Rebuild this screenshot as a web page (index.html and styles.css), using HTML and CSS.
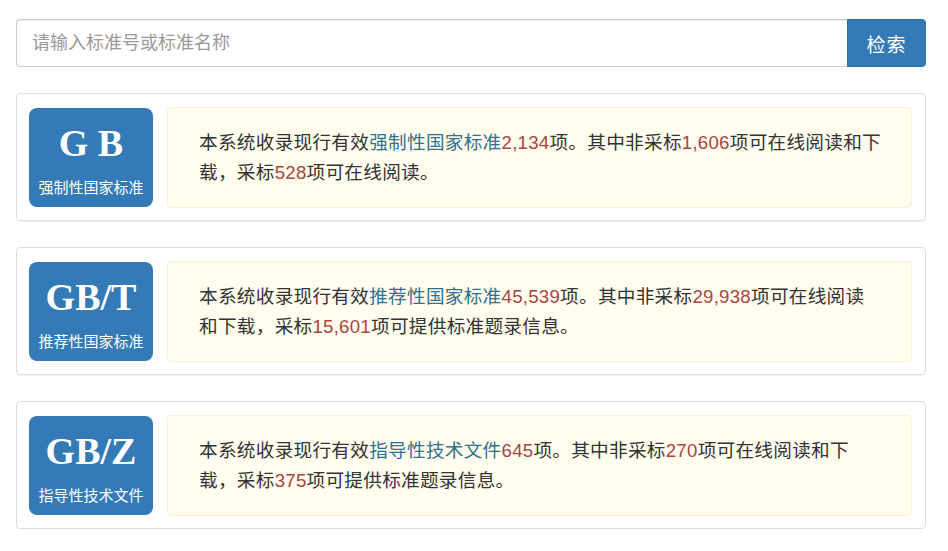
FILE: index.html
```html
<!DOCTYPE html>
<html lang="zh-CN">
<head>
<meta charset="utf-8">
<title>标准检索</title>
<link rel="stylesheet" href="styles.css">
</head>
<body>
<div class="page">
  <form class="search">
    <input class="search-input" type="text" placeholder="请输入标准号或标准名称">
    <button class="search-btn" type="button">检索</button>
  </form>

  <div class="card">
    <div class="badge">
      <div class="badge-title">G B</div>
      <div class="badge-sub">强制性国家标准</div>
    </div>
    <div class="info">
      <p>本系统收录现行有效<span class="link">强制性国家标准</span><span class="num">2,134</span>项。其中非采标<span class="num">1,606</span>项可在线阅读和下<br>载，采标<span class="num">528</span>项可在线阅读。</p>
    </div>
  </div>

  <div class="card">
    <div class="badge">
      <div class="badge-title">GB/T</div>
      <div class="badge-sub">推荐性国家标准</div>
    </div>
    <div class="info">
      <p>本系统收录现行有效<span class="link">推荐性国家标准</span><span class="num">45,539</span>项。其中非采标<span class="num">29,938</span>项可在线阅读<br>和下载，采标<span class="num">15,601</span>项可提供标准题录信息。</p>
    </div>
  </div>

  <div class="card">
    <div class="badge">
      <div class="badge-title">GB/Z</div>
      <div class="badge-sub">指导性技术文件</div>
    </div>
    <div class="info">
      <p>本系统收录现行有效<span class="link">指导性技术文件</span><span class="num">645</span>项。其中非采标<span class="num">270</span>项可在线阅读和下<br>载，采标<span class="num">375</span>项可提供标准题录信息。</p>
    </div>
  </div>
</div>
</body>
</html>
```

FILE: styles.css
```css
html, body {
  margin: 0;
  padding: 0;
  background: #fff;
}
body {
  font-family: "Liberation Sans", "Noto Sans CJK SC", sans-serif;
  color: #333;
}
.page {
  padding: 19px 22px 0 16px;
  display: flex;
  flex-direction: column;
  gap: 26px;
}
.search {
  display: flex;
  height: 48px;
  margin: 0;
}
.search-input {
  flex: 1;
  box-sizing: border-box;
  height: 48px;
  border: 1px solid #ccc;
  border-right: none;
  border-radius: 4px 0 0 4px;
  padding: 0 15px;
  font-size: 18px;
  font-family: "Liberation Sans", "Noto Sans CJK SC", sans-serif;
  color: #555;
  box-shadow: inset 0 1px 1px rgba(0,0,0,.075);
  outline: none;
}
.search-input::placeholder {
  color: #999;
}
.search-btn {
  width: 79px;
  height: 48px;
  border: 1px solid #2e6da4;
  background: #337ab7;
  color: #fff;
  font-size: 19px;
  font-family: "Liberation Sans", "Noto Sans CJK SC", sans-serif;
  border-radius: 0 4px 4px 0;
  padding: 0;
  letter-spacing: 1px;
}
.card {
  display: flex;
  align-items: center;
  gap: 14px;
  border: 1px solid #ddd;
  border-radius: 4px;
  padding: 13px 13px 12px 12px;
  box-shadow: 0 1px 1px rgba(0,0,0,.05);
}
.badge {
  flex: none;
  width: 124px;
  height: 99px;
  box-sizing: border-box;
  background: #337ab7;
  border-radius: 8px;
  color: #fff;
  text-align: center;
  padding-top: 13px;
}
.badge-title {
  font-family: "Liberation Serif", serif;
  font-weight: bold;
  font-size: 38px;
  line-height: 44px;
  white-space: pre;
}
.badge-sub {
  margin-top: 12px;
  font-family: "Noto Sans CJK SC", sans-serif;
  font-size: 15px;
  line-height: 20px;
}
.info {
  flex: 1;
  height: 101px;
  box-sizing: border-box;
  display: flex;
  align-items: center;
  background: #fffdee;
  border: 1px solid #f8f2d6;
  border-radius: 4px;
  padding: 0 12px 0 31px;
}
.info p {
  margin: 0;
  font-size: 18.67px;
  line-height: 30px;
  letter-spacing: 0.25px;
  color: #333;
  white-space: nowrap;
}
.link {
  color: #31708f;
}
.num {
  color: #a94442;
}
```
